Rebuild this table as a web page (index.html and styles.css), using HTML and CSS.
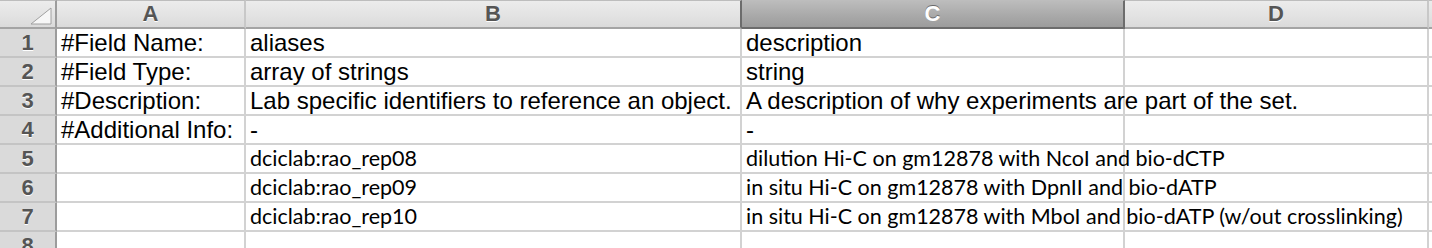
FILE: index.html
```html
<!DOCTYPE html>
<html>
<head>
<meta charset="utf-8">
<link rel="stylesheet" href="styles.css">
</head>
<body>
<div class="sheet">
  <div class="hdr corner">
    <svg class="tri" width="24" height="20" viewBox="0 0 24 20"><polygon points="2,18 22,18 22,2" fill="#f7f7f7" stroke="#a0a0a0" stroke-width="1"/></svg>
  </div>
  <div class="hdr col">A</div>
  <div class="hdr col pre-sel">B</div>
  <div class="hdr col sel">C</div>
  <div class="hdr col">D</div>
  <div class="hdr col last"></div>

  <div class="rh">1</div>
  <div class="cell arial">#Field Name:</div>
  <div class="cell arial">aliases</div>
  <div class="cell arial">description</div>
  <div class="cell"></div>
  <div class="cell last"></div>

  <div class="rh">2</div>
  <div class="cell arial">#Field Type:</div>
  <div class="cell arial">array of strings</div>
  <div class="cell arial">string</div>
  <div class="cell"></div>
  <div class="cell last"></div>

  <div class="rh">3</div>
  <div class="cell arial">#Description:</div>
  <div class="cell arial">Lab specific identifiers to reference an object.</div>
  <div class="cell arial">A description of why experiments are part of the set.</div>
  <div class="cell"></div>
  <div class="cell last"></div>

  <div class="rh">4</div>
  <div class="cell arial">#Additional Info:</div>
  <div class="cell arial">-</div>
  <div class="cell arial">-</div>
  <div class="cell"></div>
  <div class="cell last"></div>

  <div class="rh">5</div>
  <div class="cell"></div>
  <div class="cell cal">dciclab:rao_rep08</div>
  <div class="cell cal">dilution Hi-C on gm12878 with NcoI and bio-dCTP</div>
  <div class="cell"></div>
  <div class="cell last"></div>

  <div class="rh">6</div>
  <div class="cell"></div>
  <div class="cell cal">dciclab:rao_rep09</div>
  <div class="cell cal">in situ Hi-C on gm12878 with DpnII and bio-dATP</div>
  <div class="cell"></div>
  <div class="cell last"></div>

  <div class="rh">7</div>
  <div class="cell"></div>
  <div class="cell cal">dciclab:rao_rep10</div>
  <div class="cell cal">in situ Hi-C on gm12878 with MboI and bio-dATP (w/out crosslinking)</div>
  <div class="cell"></div>
  <div class="cell last"></div>

  <div class="rh">8</div>
  <div class="cell"></div>
  <div class="cell"></div>
  <div class="cell"></div>
  <div class="cell"></div>
  <div class="cell last"></div>
</div>
</body>
</html>
```

FILE: styles.css
```css
html, body {
  margin: 0;
  padding: 0;
  background: #ffffff;
  height: 248px;
  overflow: hidden;
}

.sheet {
  display: grid;
  grid-template-columns: 57px 189px 496px 383px 304px 1fr;
  grid-auto-rows: 29px;
}

.hdr {
  box-sizing: border-box;
  border-top: 1px solid #bdbdbd;
  border-right: 2px solid #c8c8c8;
  border-bottom: 2px solid #a4a4a4;
  background: linear-gradient(#ececec, #e2e2e2 60%, #dadada);
  font-family: "Liberation Sans", Arial, sans-serif;
  font-weight: bold;
  font-size: 22px;
  color: #555555;
  text-shadow: 0 1px 0 #ffffff;
  display: flex;
  align-items: center;
  justify-content: center;
  line-height: 1;
}

.corner {
  position: relative;
  border-right: 2px solid #9c9c9c;
  justify-content: flex-end;
  align-items: flex-end;
  padding: 0 2px 1px 0;
}

.tri {
  display: block;
}

.hdr.pre-sel {
  border-right-color: #6c6c6c;
}

.hdr.sel {
  background: linear-gradient(#bcbcbc, #a8a8a8 60%, #9c9c9c);
  border-right-color: #6c6c6c;
  border-bottom-color: #6c6c6c;
  color: #ffffff;
  text-shadow: 0 -1px 0 #6a6a6a;
}

.hdr.last {
  border-right: none;
}

.rh {
  box-sizing: border-box;
  background: #dadada;
  border-right: 2px solid #9c9c9c;
  border-bottom: 2px solid #c4c4c4;
  font-family: "Liberation Sans", Arial, sans-serif;
  font-weight: bold;
  font-size: 22px;
  color: #555555;
  text-shadow: 0 1px 0 #ffffff;
  display: flex;
  align-items: center;
  justify-content: center;
  line-height: 1;
}

.cell {
  box-sizing: border-box;
  border-right: 2px solid #d2d2d2;
  border-bottom: 2px solid #d2d2d2;
  padding-left: 4px;
  white-space: nowrap;
  overflow: visible;
  color: #000000;
  line-height: 27px;
}

.cell.last {
  border-right: none;
}

.arial {
  font-family: "Liberation Sans", Arial, sans-serif;
  font-size: 24px;
}

.cal {
  font-family: Lato, "Open Sans", sans-serif;
  font-size: 21.5px;
}
```
